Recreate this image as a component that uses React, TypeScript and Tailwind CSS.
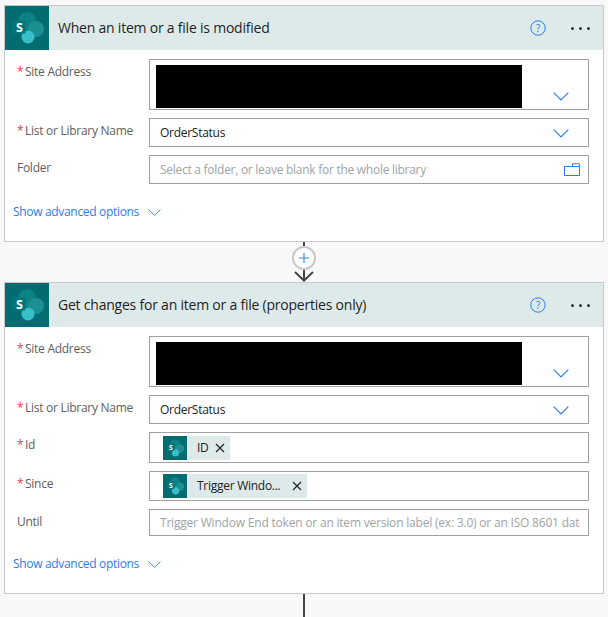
import React from 'react';

const FONT = "font-['Open_Sans','Noto_Sans',sans-serif] tracking-[-0.27px]";

function SharePointIcon({ size }: { size: number }) {
  return (
    <svg width={size} height={size} viewBox="0 0 44 44">
      <circle cx="22" cy="15" r="9" fill="#0c8286" />
      <circle cx="31" cy="23" r="8" fill="#1b8f93" />
      <circle cx="23" cy="31" r="6.5" fill="#37c0c8" />
      <rect x="7" y="14" width="13.5" height="13.5" rx="1.2" fill="#04767a" />
      <text x="14.3" y="26" textAnchor="middle" fontSize="12.5" fontWeight="700" fill="#fff" fontFamily="Open Sans, sans-serif">
        S
      </text>
    </svg>
  );
}

function Chevron({ className = '' }: { className?: string }) {
  return (
    <svg width="16" height="9" viewBox="0 0 16 9" className={className}>
      <path d="M0.7 0.7 L8 8 L15.3 0.7" fill="none" stroke="#2b7cf6" strokeWidth="1.2" />
    </svg>
  );
}

function Close() {
  return (
    <svg width="10" height="10" viewBox="0 0 10 10">
      <path d="M1 1 L9 9 M9 1 L1 9" stroke="#222" strokeWidth="1.2" />
    </svg>
  );
}

function Header({ title }: { title: string }) {
  return (
    <div className="flex h-[44px] items-center bg-[#deeae9]">
      <div className="h-[44px] w-[44px] shrink-0 bg-[#036c70]">
        <SharePointIcon size={44} />
      </div>
      <span className="ml-[9px] flex-1 pb-[2px] text-[14px] tracking-[-0.22px] text-[#1f1f1f]">{title}</span>
      <svg width="16" height="16" viewBox="0 0 16 16" className="mr-[25px] mb-[1px]">
        <circle cx="8" cy="8" r="7.2" fill="none" stroke="#2b7cf6" strokeWidth="1" />
        <text x="8" y="11.6" textAnchor="middle" fontSize="10" fill="#2b7cf6" fontFamily="Open Sans, sans-serif">
          ?
        </text>
      </svg>
      <div className="mr-[13px] flex gap-[5px]">
        <span className="h-[3px] w-[3px] rounded-full bg-[#333]" />
        <span className="h-[3px] w-[3px] rounded-full bg-[#333]" />
        <span className="h-[3px] w-[3px] rounded-full bg-[#333]" />
      </div>
    </div>
  );
}

function Row({ label, required = true, children }: { label: string; required?: boolean; children: React.ReactNode }) {
  return (
    <div className="flex">
      <div className="w-[135px] shrink-0 pl-[3px] pt-[5px] text-[12px] leading-[16px] text-[#605e5c]">
        {required ? <span className="mr-[2px] inline-block w-[6px] text-[#e8384f]">*</span> : <span />}
        {label}
      </div>
      <div className="flex-1 border border-[#a0a0a0] bg-white">{children}</div>
    </div>
  );
}

function SiteAddress() {
  return (
    <Row label="Site Address">
      <div className="flex h-[49px] pl-[6px] pt-[5px]">
        <div className="h-[43px] w-[366px] bg-black" />
        <Chevron className="ml-[31px] mt-[27px]" />
      </div>
    </Row>
  );
}

function ListName() {
  return (
    <Row label="List or Library Name">
      <div className="flex h-[27px] items-center justify-between pl-[10px] pr-[19px] text-[12px] text-[#222]">
        <span>OrderStatus</span>
        <Chevron className="mt-[2px]" />
      </div>
    </Row>
  );
}

function Placeholder({ text, height, children }: { text: string; height: string; children?: React.ReactNode }) {
  return (
    <div className={`flex items-center pl-[10px] pr-[8px] ${height}`}>
      <input
        readOnly
        placeholder={text}
        className="min-w-0 flex-1 bg-transparent text-[12px] outline-none placeholder:text-[#a0a3a8]"
      />
      {children}
    </div>
  );
}

function Token({ label, wide }: { label: string; wide?: boolean }) {
  return (
    <div className={`flex h-[24px] items-center bg-[#deeae9] ${wide ? 'w-[144px]' : 'w-[67px]'}`}>
      <div className="h-[24px] w-[24px] shrink-0 bg-[#036c70]">
        <SharePointIcon size={24} />
      </div>
      <span className="ml-[10px] flex-1 text-[12px] text-[#222]">{label}</span>
      <div className="mr-[5px]">
        <Close />
      </div>
    </div>
  );
}

function ShowAdvanced() {
  return (
    <div className="mb-[19px] ml-[-1px] mt-[10px] flex h-[20px] items-center text-[12px] tracking-[-0.32px] text-[#2b7cf6]">
      <span>Show advanced options</span>
      <svg width="13" height="7" viewBox="0 0 13 7" className="ml-[9px]">
        <path d="M0.5 0.5 L6.5 6.3 L12.5 0.5" fill="none" stroke="#2b7cf6" strokeWidth="0.9" />
      </svg>
    </div>
  );
}

function Card({ title, children }: { title: string; children: React.ReactNode }) {
  return (
    <div className="border border-[#c8c8c8] bg-white">
      <Header title={title} />
      <div className="flex flex-col gap-[8px] pl-[9px] pr-[14px] pt-[9px]">{children}</div>
    </div>
  );
}

function Connector() {
  return (
    <div className="flex h-[40px] flex-col items-center">
      <div className="h-[4px] w-[2px] bg-[#444]" />
      <div className="flex h-[24px] w-[24px] items-center justify-center rounded-full border-2 border-[#c8c8c8] bg-white">
        <svg width="12" height="12" viewBox="0 0 12 12">
          <path d="M6 1 V11 M1 6 H11" stroke="#3b8fd8" strokeWidth="1.2" />
        </svg>
      </div>
      <svg width="20" height="12" viewBox="0 0 20 12">
        <path d="M10 0 V10 M1 2 L10 10.5 L19 2" fill="none" stroke="#444" strokeWidth="2" />
      </svg>
    </div>
  );
}

export default function App() {
  return (
    <div className={`h-[617px] overflow-hidden bg-[#f8f8f8] pl-[4px] pr-[4px] pt-[5px] ${FONT}`}>
      <Card title="When an item or a file is modified">
        <SiteAddress />
        <ListName />
        <Row label="Folder" required={false}>
          <Placeholder text="Select a folder, or leave blank for the whole library" height="h-[27px]">
            <svg width="16" height="13" viewBox="0 0 16 13">
              <path d="M0.5 3.5 H15.5 V12.5 H0.5 Z M8.5 3.5 V0.8 H15.5 V3.5" fill="none" stroke="#2b7cf6" strokeWidth="1" />
            </svg>
          </Placeholder>
        </Row>
        <ShowAdvanced />
      </Card>
      <Connector />
      <Card title="Get changes for an item or a file (properties only)">
        <SiteAddress />
        <ListName />
        <Row label="Id">
          <div className="flex h-[29px] items-center pl-[13px]">
            <Token label="ID" />
          </div>
        </Row>
        <Row label="Since">
          <div className="flex h-[28px] items-center pl-[13px]">
            <Token label="Trigger Windo..." wide />
          </div>
        </Row>
        <Row label="Until" required={false}>
          <div className="tracking-[-0.2px]">
            <Placeholder text="Trigger Window End token or an item version label (ex: 3.0) or an ISO 8601 date" height="h-[25px]" />
          </div>
        </Row>
        <ShowAdvanced />
      </Card>
      <div className="mx-auto h-[24px] w-[2px] bg-[#444]" />
    </div>
  );
}
